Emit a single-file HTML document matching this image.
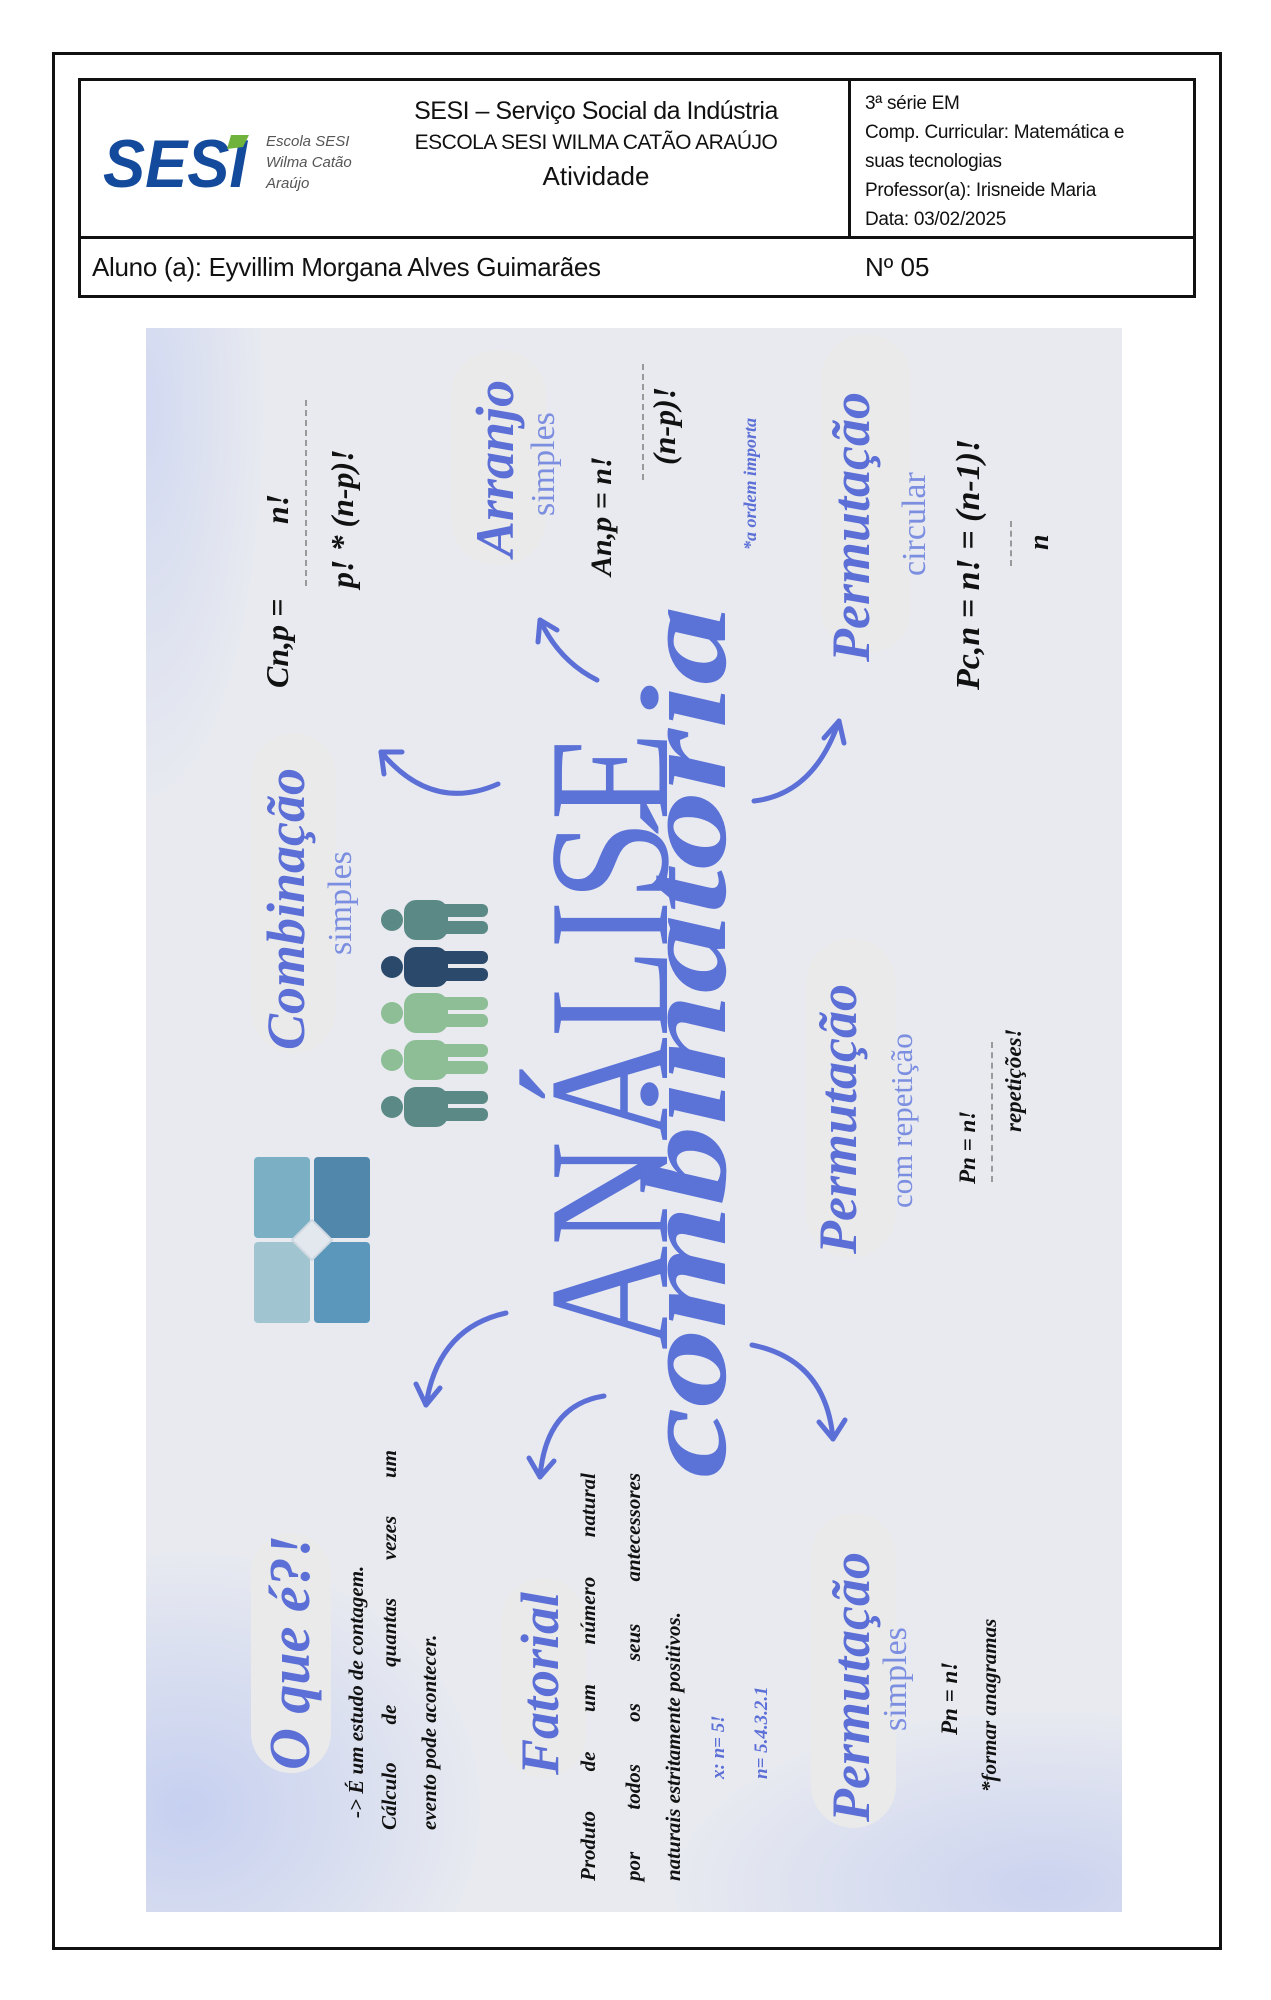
<!DOCTYPE html>
<html><head><meta charset="utf-8">
<style>
*{margin:0;padding:0;box-sizing:border-box}
body{width:1271px;height:2000px;background:#fff;position:relative;overflow:hidden;font-family:"Liberation Sans Narrow","Liberation Sans",sans-serif}
.outer{position:absolute;left:52px;top:52px;width:1170px;height:1898px;border:3px solid #111}
.hdr{position:absolute;left:78px;top:78px;width:1118px;height:220px;border:3px solid #111}
.hl{position:absolute;left:0;top:155px;width:100%;border-top:3px solid #111}
.vl{position:absolute;left:767px;top:0;height:155px;border-left:3px solid #111}
.ht{position:absolute;color:#111;white-space:nowrap}
.img{position:absolute;left:146px;top:328px;width:976px;height:1584px;overflow:hidden;
background:radial-gradient(ellipse 300px 260px at 40px 1480px,#c6d0f0 0%,rgba(198,208,240,0) 100%),
radial-gradient(ellipse 380px 180px at 900px 1560px,#cbd3ef 0%,rgba(203,211,239,0) 100%),
radial-gradient(ellipse 120px 400px at 0px 80px,#d2d9f1 0%,rgba(210,217,241,0) 100%),#e8eaf0}
.r{position:absolute;transform-origin:0 0;transform:rotate(-90deg);white-space:nowrap;line-height:1}
.t{font-family:"Liberation Serif",serif;font-weight:bold;font-style:italic;color:#5b6fd6}
.s{font-family:"Liberation Serif",serif;color:#7b8ee0}
.k{font-family:"Liberation Serif",serif;font-weight:bold;font-style:italic;color:#111}
.bub{position:absolute;background:#eaeaea;border-radius:45px}
.j{text-align:justify;text-align-last:justify;display:block}
</style></head><body>
<div class="outer"></div>
<div class="hdr">
 <div class="hl"></div><div class="vl"></div>
 <svg style="position:absolute;left:22px;top:50px" width="180" height="62" viewBox="0 0 180 62">
  <text x="0" y="56" font-family="Liberation Sans" font-weight="bold" font-style="italic" font-size="68" fill="#144a9b" textLength="144" lengthAdjust="spacingAndGlyphs">SESI</text>
  <polygon points="128,4 146,4 140,16 124,18" fill="#6fb33c"/>
 </svg>
 <div class="ht" style="left:185px;top:50px;font-size:15px;font-style:italic;color:#555;line-height:21px;font-family:'Liberation Sans',sans-serif">Escola SESI<br>Wilma Catão<br>Araújo</div>
 <div class="ht" style="left:325px;top:16px;width:380px;text-align:center;font-size:25px;letter-spacing:-0.5px">SESI – Serviço Social da Indústria</div>
 <div class="ht" style="left:325px;top:50px;width:380px;text-align:center;font-size:21px;letter-spacing:-0.5px">ESCOLA SESI WILMA CATÃO ARAÚJO</div>
 <div class="ht" style="left:325px;top:80px;width:380px;text-align:center;font-size:26px">Atividade</div>
 <div class="ht" style="left:784px;top:8px;font-size:19px;line-height:29px;letter-spacing:-0.3px">3ª série EM<br>Comp. Curricular: Matemática e<br>suas tecnologias<br>Professor(a): Irisneide Maria<br>Data: 03/02/2025</div>
 <div class="ht" style="left:11px;top:171px;font-size:26px;letter-spacing:-0.3px">Aluno (a): Eyvillim Morgana Alves Guimarães</div>
 <div class="ht" style="left:784px;top:171px;font-size:26px">Nº 05</div>
</div>

<div class="img">
 <div class="bub" style="left:105px;top:1205px;width:80px;height:240px"></div>
 <div class="bub" style="left:355px;top:1250px;width:85px;height:200px"></div>
 <div class="bub" style="left:105px;top:405px;width:85px;height:320px"></div>
 <div class="bub" style="left:305px;top:22px;width:95px;height:215px"></div>
 <div class="bub" style="left:665px;top:1185px;width:85px;height:315px"></div>
 <div class="bub" style="left:660px;top:610px;width:90px;height:320px"></div>
 <div class="bub" style="left:675px;top:6px;width:90px;height:320px"></div>

 <div class="r t" style="left:115px;top:1442px;font-size:58px">O que é?!</div>
 <div class="r k" style="left:200px;top:1490px;font-size:21px">-&gt; É um estudo de contagem.</div>
 <div class="r k" style="left:233px;top:1502px;font-size:21px;width:380px"><span class="j">Cálculo de quantas vezes um</span></div>
 <div class="r k" style="left:273px;top:1502px;font-size:21px">evento pode acontecer.</div>
 <div class="r t" style="left:367px;top:1447px;font-size:54px">Fatorial</div>
 <div class="r k" style="left:432px;top:1553px;font-size:21px;width:408px"><span class="j">Produto de um número natural</span></div>
 <div class="r k" style="left:477px;top:1553px;font-size:21px;width:408px"><span class="j">por todos os seus antecessores</span></div>
 <div class="r k" style="left:517px;top:1553px;font-size:21px">naturais estritamente positivos.</div>
 <div class="r t" style="left:563px;top:1451px;font-size:19px">x: n= 5!</div>
 <div class="r t" style="left:606px;top:1451px;font-size:19px">n= 5.4.3.2.1</div>
 <div class="r t" style="left:678px;top:1494px;font-size:54px">Permutação</div>
 <div class="r s" style="left:733px;top:1403px;font-size:34px">simples</div>
 <div class="r k" style="left:792px;top:1407px;font-size:23px">Pn = n!</div>
 <div class="r k" style="left:833px;top:1464px;font-size:21px">*formar anagramas</div>

 <div class="r t" style="left:113px;top:722px;font-size:54px">Combinação</div>
 <div class="r s" style="left:178px;top:627px;font-size:34px">simples</div>
 <svg style="position:absolute;left:108px;top:829px" width="116" height="166" viewBox="0 0 116 166">
  <rect x="0" y="0" width="56" height="81" rx="4" fill="#7aafc4"/>
  <rect x="60" y="0" width="56" height="81" rx="4" fill="#5087ab"/>
  <rect x="0" y="85" width="56" height="81" rx="4" fill="#a1c4d1"/>
  <rect x="60" y="85" width="56" height="81" rx="4" fill="#5b97ba"/>
  <polygon points="58,63 78,83 58,103 38,83" fill="#e3e8ee" stroke="#cfd8e2" stroke-width="2"/>
 </svg>
 <svg style="position:absolute;left:234px;top:568px" width="110" height="234" viewBox="0 0 110 234">
  <g fill="#5b8a86"><circle cx="12" cy="24" r="11"/><rect x="24" y="4" width="44" height="40" rx="12"/><rect x="40" y="8" width="68" height="13" rx="6"/><rect x="40" y="25" width="68" height="13" rx="6"/></g>
  <g fill="#2b4a6b"><circle cx="12" cy="71" r="11"/><rect x="24" y="51" width="44" height="40" rx="12"/><rect x="40" y="55" width="68" height="13" rx="6"/><rect x="40" y="72" width="68" height="13" rx="6"/></g>
  <g fill="#8dbe96"><circle cx="12" cy="117" r="11"/><rect x="24" y="97" width="44" height="40" rx="12"/><rect x="40" y="101" width="68" height="13" rx="6"/><rect x="40" y="118" width="68" height="13" rx="6"/></g>
  <g fill="#8dbe96"><circle cx="12" cy="164" r="11"/><rect x="24" y="144" width="44" height="40" rx="12"/><rect x="40" y="148" width="68" height="13" rx="6"/><rect x="40" y="165" width="68" height="13" rx="6"/></g>
  <g fill="#5b8a86"><circle cx="12" cy="211" r="11"/><rect x="24" y="191" width="44" height="40" rx="12"/><rect x="40" y="195" width="68" height="13" rx="6"/><rect x="40" y="212" width="68" height="13" rx="6"/></g>
 </svg>
 <div class="r" style="left:378px;top:1022px;font-family:'Liberation Serif',serif;font-size:172px;color:#5b72d6;transform:rotate(-90deg) scale(0.84,1)">ANÁLISE</div>
 <div class="r t" style="left:478px;top:1150px;font-size:122px;color:#5b72d6;transform:rotate(-90deg) scale(1.3,1)">combinatória</div>

 <div class="r k" style="left:115px;top:360px;font-size:32px">Cn,p =</div>
 <div class="r k" style="left:115px;top:196px;font-size:32px">n!</div>
 <div style="position:absolute;left:159px;top:72px;height:186px;border-left:2px dashed #999"></div>
 <div class="r k" style="left:180px;top:260px;font-size:32px">p! * (n-p)!</div>
 <div class="r t" style="left:322px;top:229px;font-size:54px">Arranjo</div>
 <div class="r s" style="left:381px;top:188px;font-size:34px">simples</div>
 <div class="r k" style="left:441px;top:248px;font-size:30px">An,p = n!</div>
 <div style="position:absolute;left:496px;top:36px;height:116px;border-left:2px dashed #999"></div>
 <div class="r k" style="left:502px;top:137px;font-size:32px">(n-p)!</div>
 <div class="r k" style="left:595px;top:222px;font-size:18px;color:#5b6fd6">*a ordem importa</div>
 <div class="r t" style="left:678px;top:334px;font-size:54px">Permutação</div>
 <div class="r s" style="left:752px;top:248px;font-size:34px">circular</div>
 <div class="r k" style="left:806px;top:362px;font-size:34px">Pc,n = n! = (n-1)!</div>
 <div style="position:absolute;left:864px;top:193px;height:45px;border-left:2px dashed #999"></div>
 <div class="r k" style="left:880px;top:222px;font-size:28px">n</div>
 <div class="r t" style="left:665px;top:926px;font-size:54px">Permutação</div>
 <div class="r s" style="left:740px;top:880px;font-size:31px">com repetição</div>
 <div class="r k" style="left:810px;top:856px;font-size:23px">Pn = n!</div>
 <div style="position:absolute;left:845px;top:714px;height:140px;border-left:2px dashed #999"></div>
 <div class="r k" style="left:856px;top:804px;font-size:23px">repetições!</div>

 <svg style="position:absolute;left:0;top:0" width="976" height="1584" viewBox="0 0 976 1584" fill="none" stroke="#5b6fd6" stroke-width="5" stroke-linecap="round">
  <path d="M352 456 Q286 485 235 424"/><path d="M235 424 L238 446 M235 424 L256 424"/>
  <path d="M451 352 Q413 333 394 292"/><path d="M394 292 L392 314 M394 292 L411 302"/>
  <path d="M608 473 Q668 466 693 393"/><path d="M693 393 L678 410 M693 393 L698 415"/>
  <path d="M360 985 Q292 1000 280 1077"/><path d="M280 1077 L270 1056 M280 1077 L294 1060"/>
  <path d="M458 1068 Q400 1077 394 1149"/><path d="M394 1149 L383 1130 M394 1149 L408 1133"/>
  <path d="M606 1017 Q680 1032 687 1111"/><path d="M687 1111 L673 1094 M687 1111 L699 1092"/>
 </svg>
</div>
</body></html>
